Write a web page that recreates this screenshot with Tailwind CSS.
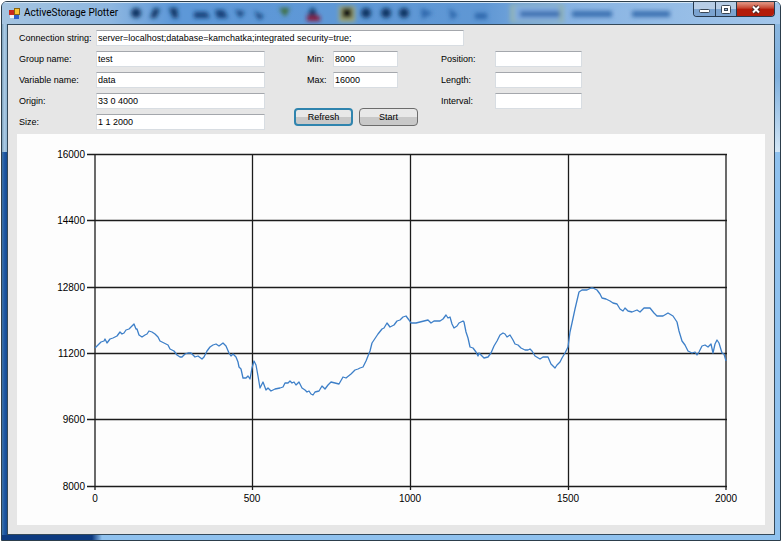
<!DOCTYPE html>
<html lang="en">
<head>
    <meta charset="UTF-8">
    <meta name="viewport" content="width=device-width, initial-scale=1.0">
    <title>ActiveStorage Plotter</title>
    <script src="https://cdn.jsdelivr.net/npm/@tailwindcss/browser@4"></script>
</head>
<body class="bg-white p-px font-['Liberation_Sans',sans-serif] text-[9px] leading-4 text-black">
    <div class="relative overflow-hidden rounded-t-md border border-[#2c3e4c] bg-[#8fc1ee] px-[5px] pb-[5px]">

        <!-- glass frame -->
        <div class="absolute inset-y-0 left-0 w-[5px] bg-linear-to-r from-[#7fa3bd] via-[#a9c9e4] to-[#8fb5d2]"></div>
        <div class="absolute bottom-0 left-0 top-[150px] w-[5px] bg-linear-to-r from-[#3f72a4] via-[#1d58a6] to-[#164a8e]"></div>
        <div class="absolute bottom-0 left-0 h-[5px] w-[100px] bg-linear-to-r from-[#0d3a80] from-90% to-[#8fc1ee]"></div>
        <div class="absolute right-0 top-0 h-[150px] w-[5px] bg-linear-to-b from-[#8fb9e0] via-[#7fb0de] to-[#d3e6f5]"></div>
        <svg class="absolute left-0 top-0 h-[22px] w-full" viewBox="0 0 778 22" preserveAspectRatio="none" aria-hidden="true">
            <defs>
                <linearGradient id="glass">
                    <stop offset="0" stop-color="#a5c4e0"/>
                    <stop offset=".14" stop-color="#8db6e0"/>
                    <stop offset=".22" stop-color="#5d98d8"/>
                    <stop offset=".62" stop-color="#5f97d4"/>
                    <stop offset=".72" stop-color="#86b2e2"/>
                    <stop offset="1" stop-color="#a3c6ea"/>
                </linearGradient>
                <filter id="soft" x="-50%" y="-50%" width="200%" height="200%"><feGaussianBlur stdDeviation="2"/></filter>
            </defs>
            <rect width="778" height="22" fill="url(#glass)"/>
            <g filter="url(#soft)" fill="#0f3464">
                <circle cx="134" cy="11" r="5"/>
                <path d="M148 16l4-10 6 1-4 9zM167 6h8l1 10h-5z"/>
                <path d="M192 10h13l3 6h-16zM213 8h9l4 8h-11zM233 8l10 2-5 6zM252 9l10 5-5 4z" fill="#164078"/>
                <path d="M277 6h11l-5 9z" fill="#3c6d3a"/>
                <path d="M309 6h3l4 9h-11z"/>
                <path d="M305 14h13v5h-13z" fill="#8b1738"/>
                <rect x="337" y="4" width="16" height="16" fill="#a0a878"/>
                <rect x="340" y="6" width="10" height="10" fill="#14140c"/>
                <circle cx="364" cy="11" r="5"/>
                <circle cx="384" cy="11" r="5"/>
                <circle cx="402" cy="11" r="5"/>
                <path d="M419 6l12 5-11 6zM447 6l9 7-7 5zM473 11h12v6h-12z" fill="#2f68ac"/>
                <path d="M508 2h54v19h-54z" fill="#8fb2b8"/>
                <path d="M513 4h44v15h-44z" fill="#80ace0"/>
                <path d="M518 9h40v6h-40zM570 9h40v6h-40zM630 9h38v6h-38z" fill="#3a6fb0"/>
            </g>
            <rect width="778" height="1" fill="#d4e6f6"/>
        </svg>

        <header class="relative flex h-[22px] items-start pl-0.5">
            <svg class="mt-[6px] h-[11px] w-[11px]" viewBox="0 0 11 11" aria-hidden="true">
                <rect x="0" y="2" width="5" height="5" fill="#c8281e"/>
                <rect x="5" y="0" width="6" height="7" fill="#8a6410"/>
                <rect x="6" y="1" width="4" height="5" fill="#f9c334"/>
                <rect x="1" y="7" width="4" height="3" fill="#f2f2f2"/>
                <rect x="5" y="7" width="5" height="4" fill="#2f5fc8"/>
            </svg>
            <h1 class="ml-1 mt-[3px] font-['Roboto','Liberation_Sans',sans-serif] text-[10px] leading-4">ActiveStorage Plotter</h1>
            <div class="ml-auto flex h-[15px] overflow-hidden rounded-b border border-t-0 border-[#27394e]">
                <button type="button" aria-label="Minimize" class="flex w-[22px] items-center justify-center border-r border-[#27394e] bg-linear-to-b from-[#b7cde6] from-50% to-[#7ba3d0] to-50%">
                    <svg class="mt-1 h-1 w-[11px]" viewBox="0 0 11 4"><rect x=".5" y=".5" width="10" height="3" rx="1" fill="#fff" stroke="#3a4654"/></svg>
                </button>
                <button type="button" aria-label="Maximize" class="flex w-[21px] items-center justify-center border-r border-[#27394e] bg-linear-to-b from-[#b7cde6] from-50% to-[#7ba3d0] to-50%">
                    <svg class="h-[9px] w-[10px]" viewBox="0 0 10 9"><rect x=".5" y=".5" width="9" height="8" rx="1" fill="#fff" stroke="#3a4654"/><rect x="3.500" y="3.500" width="3" height="2" fill="#9ab8dc" stroke="#3a4654"/></svg>
                </button>
                <button type="button" aria-label="Close" class="flex w-[37px] items-center justify-center bg-linear-to-b from-[#dd8a78] from-10% via-[#c4402c] via-45% to-[#b31c0a] to-50%">
                    <svg class="h-[9px] w-[10px]" viewBox="0 0 10 9"><path d="M2 1.500L8 7.500M8 1.500L2 7.500" stroke="#4a2a2a" stroke-width="4"/><path d="M2 1.500L8 7.500M8 1.500L2 7.500" stroke="#fff" stroke-width="2"/></svg>
                </button>
            </div>
        </header>

        <main class="relative border border-[#34495a] bg-[#e6e6e6] px-[9px] pb-[9px] pt-[5px]">
            <form class="whitespace-nowrap">
                <div class="flex pl-0.5">
                    <label for="connection" class="w-[77px]">Connection string:</label>
                    <input id="connection" type="text" value="server=localhost;database=kamchatka;integrated security=true;" class="h-4 w-[368px] border border-[#d8dde2] border-t-[#a4a7ac] bg-white px-px">
                </div>
                <div class="mt-[5px] flex pl-0.5">
                    <div class="grid grid-cols-[77px_169px] gap-y-[5px]">
                        <label for="group">Group name:</label>
                        <input id="group" type="text" value="test" class="h-4 border border-[#d8dde2] border-t-[#a4a7ac] bg-white px-px">
                        <label for="variable">Variable name:</label>
                        <input id="variable" type="text" value="data" class="h-4 border border-[#d8dde2] border-t-[#a4a7ac] bg-white px-px">
                        <label for="origin">Origin:</label>
                        <input id="origin" type="text" value="33 0 4000" class="h-4 border border-[#d8dde2] border-t-[#a4a7ac] bg-white px-px">
                        <label for="size">Size:</label>
                        <input id="size" type="text" value="1 1 2000" class="h-4 border border-[#d8dde2] border-t-[#a4a7ac] bg-white px-px">
                    </div>
                    <div class="ml-[29px]">
                        <div class="grid grid-cols-[26px_65px] gap-y-[5px] pl-[13px]">
                            <label for="min">Min:</label>
                            <input id="min" type="text" value="8000" class="h-4 border border-[#d8dde2] border-t-[#a4a7ac] bg-white px-px">
                            <label for="max">Max:</label>
                            <input id="max" type="text" value="16000" class="h-4 border border-[#d8dde2] border-t-[#a4a7ac] bg-white px-px">
                        </div>
                        <div class="mt-5 flex gap-[6px]">
                            <button type="button" class="h-[18px] w-[59px] rounded-sm border-2 border-[#2f84ae] bg-linear-to-b from-[#e8e8e8] from-50% to-[#c8c8c8] to-50% leading-none">Refresh</button>
                            <button type="button" class="h-[18px] w-[59px] rounded-sm border border-[#6c6c6c] bg-linear-to-b from-[#e8e8e8] from-50% to-[#c8c8c8] to-50% leading-none">Start</button>
                        </div>
                    </div>
                    <div class="ml-[23px] grid grid-cols-[54px_87px] content-start gap-y-[5px]">
                        <label for="position">Position:</label>
                        <input id="position" type="text" class="h-4 border border-[#d8dde2] border-t-[#a4a7ac] bg-white px-px">
                        <label for="length">Length:</label>
                        <input id="length" type="text" class="h-4 border border-[#d8dde2] border-t-[#a4a7ac] bg-white px-px">
                        <label for="interval">Interval:</label>
                        <input id="interval" type="text" class="h-4 border border-[#d8dde2] border-t-[#a4a7ac] bg-white px-px">
                    </div>
                </div>
            </form>

            <!-- plot -->
            <svg class="mt-1 block h-auto w-full bg-[#fdfdfd] font-['Liberation_Sans',sans-serif] text-[10px]" viewBox="17 134 748 391" role="img" aria-label="Plot of data, 0 to 2000">
                <path d="M87 154.500H727M87 220.500H727M87 287.500H727M87 353.500H727M87 419.500H727M87 486.500H727M95 154V490M252.500 154V490M410.500 154V490M568.500 154V490M726 154V490" fill="none" stroke="#1c1c1c" stroke-width="1.300"/>
                <g text-anchor="end">
                    <text x="85" y="158">16000</text>
                    <text x="85" y="224">14400</text>
                    <text x="85" y="291">12800</text>
                    <text x="85" y="357">11200</text>
                    <text x="85" y="423">9600</text>
                    <text x="85" y="490">8000</text>
                </g>
                <g text-anchor="middle">
                    <text x="95" y="502">0</text>
                    <text x="252" y="502">500</text>
                    <text x="410" y="502">1000</text>
                    <text x="568" y="502">1500</text>
                    <text x="726" y="502">2000</text>
                </g>
                <polyline fill="none" stroke="#3d7fc8" stroke-width="1.300" stroke-linejoin="round" points="
                    95,348 98,345 101,342 104,341 105,339 107,343 110,339 113,338 117,336 120,332 122,334 124,333 126,330 129,329 132,326 134,324
                    136,329 137,329 139,335 142,337 145,335 147,334 149,331 152,332 155,334 158,337 160,341 164,343 168,345 170,349 174,351 177,355
                    180,357 182,357 185,354 188,353 191,353 193,355 195,357 198,356 202,359 204,357 207,351 210,347 213,345 216,344 219,346 223,343
                    226,346 229,353 231,356 233,354 236,357 238,362 239,367 241,369 243,378 246,378 248,376 250,379 252,368 254,361 256,365
                    258,376 260,388 263,382 266,390 268,388 271,391 275,389 280,388 283,387 285,383 288,383 290,381 292,383 294,382 296,385 299,382
                    302,388 305,390 307,392 309,391 311,394 313,395 315,392 319,391 322,386 325,389 328,385 331,382 335,383 339,384 343,377
                    346,378 351,374 355,370 358,369 360,368 363,367 366,361 370,351 372,343 374,340 378,334 382,329 384,328 387,323 390,327 394,325
                    397,321 400,320 403,317 406,316 409,320 411,323 416,323 420,322 424,321 428,320 431,323 434,321 440,321 443,319 446,315
                    448,318 450,317 452,324 454,328 457,326 459,323 463,321 464,322 466,332 468,338 470,347 473,348 476,352 478,356 479,353 481,355
                    484,358 488,357 491,353 494,346 497,341 500,335 503,333 505,334 507,337 510,335 513,340 515,344 518,345 521,348 525,350 528,350
                    530,349 532,351 535,356 540,359 543,357 548,357 551,364 553,366 555,368 557,365 560,362 562,358 565,353 568,347
                    570,332 572,323 575,309 579,292 582,290 587,290 591,288 593,288 597,290 600,294 602,298 606,299 610,301 613,303 617,304
                    620,309 623,311 625,308 628,311 632,312 637,310 640,312 644,308 650,308 654,313 657,316 663,316 668,313 673,316 677,322
                    679,331 682,341 685,345 688,351 692,353 695,352 697,355 699,352 702,346 705,345 708,347 711,344 713,353 715,344 717,340 719,343
                    722,353 724,354 726,361"/>
            </svg>
        </main>
    </div>
</body>
</html>
